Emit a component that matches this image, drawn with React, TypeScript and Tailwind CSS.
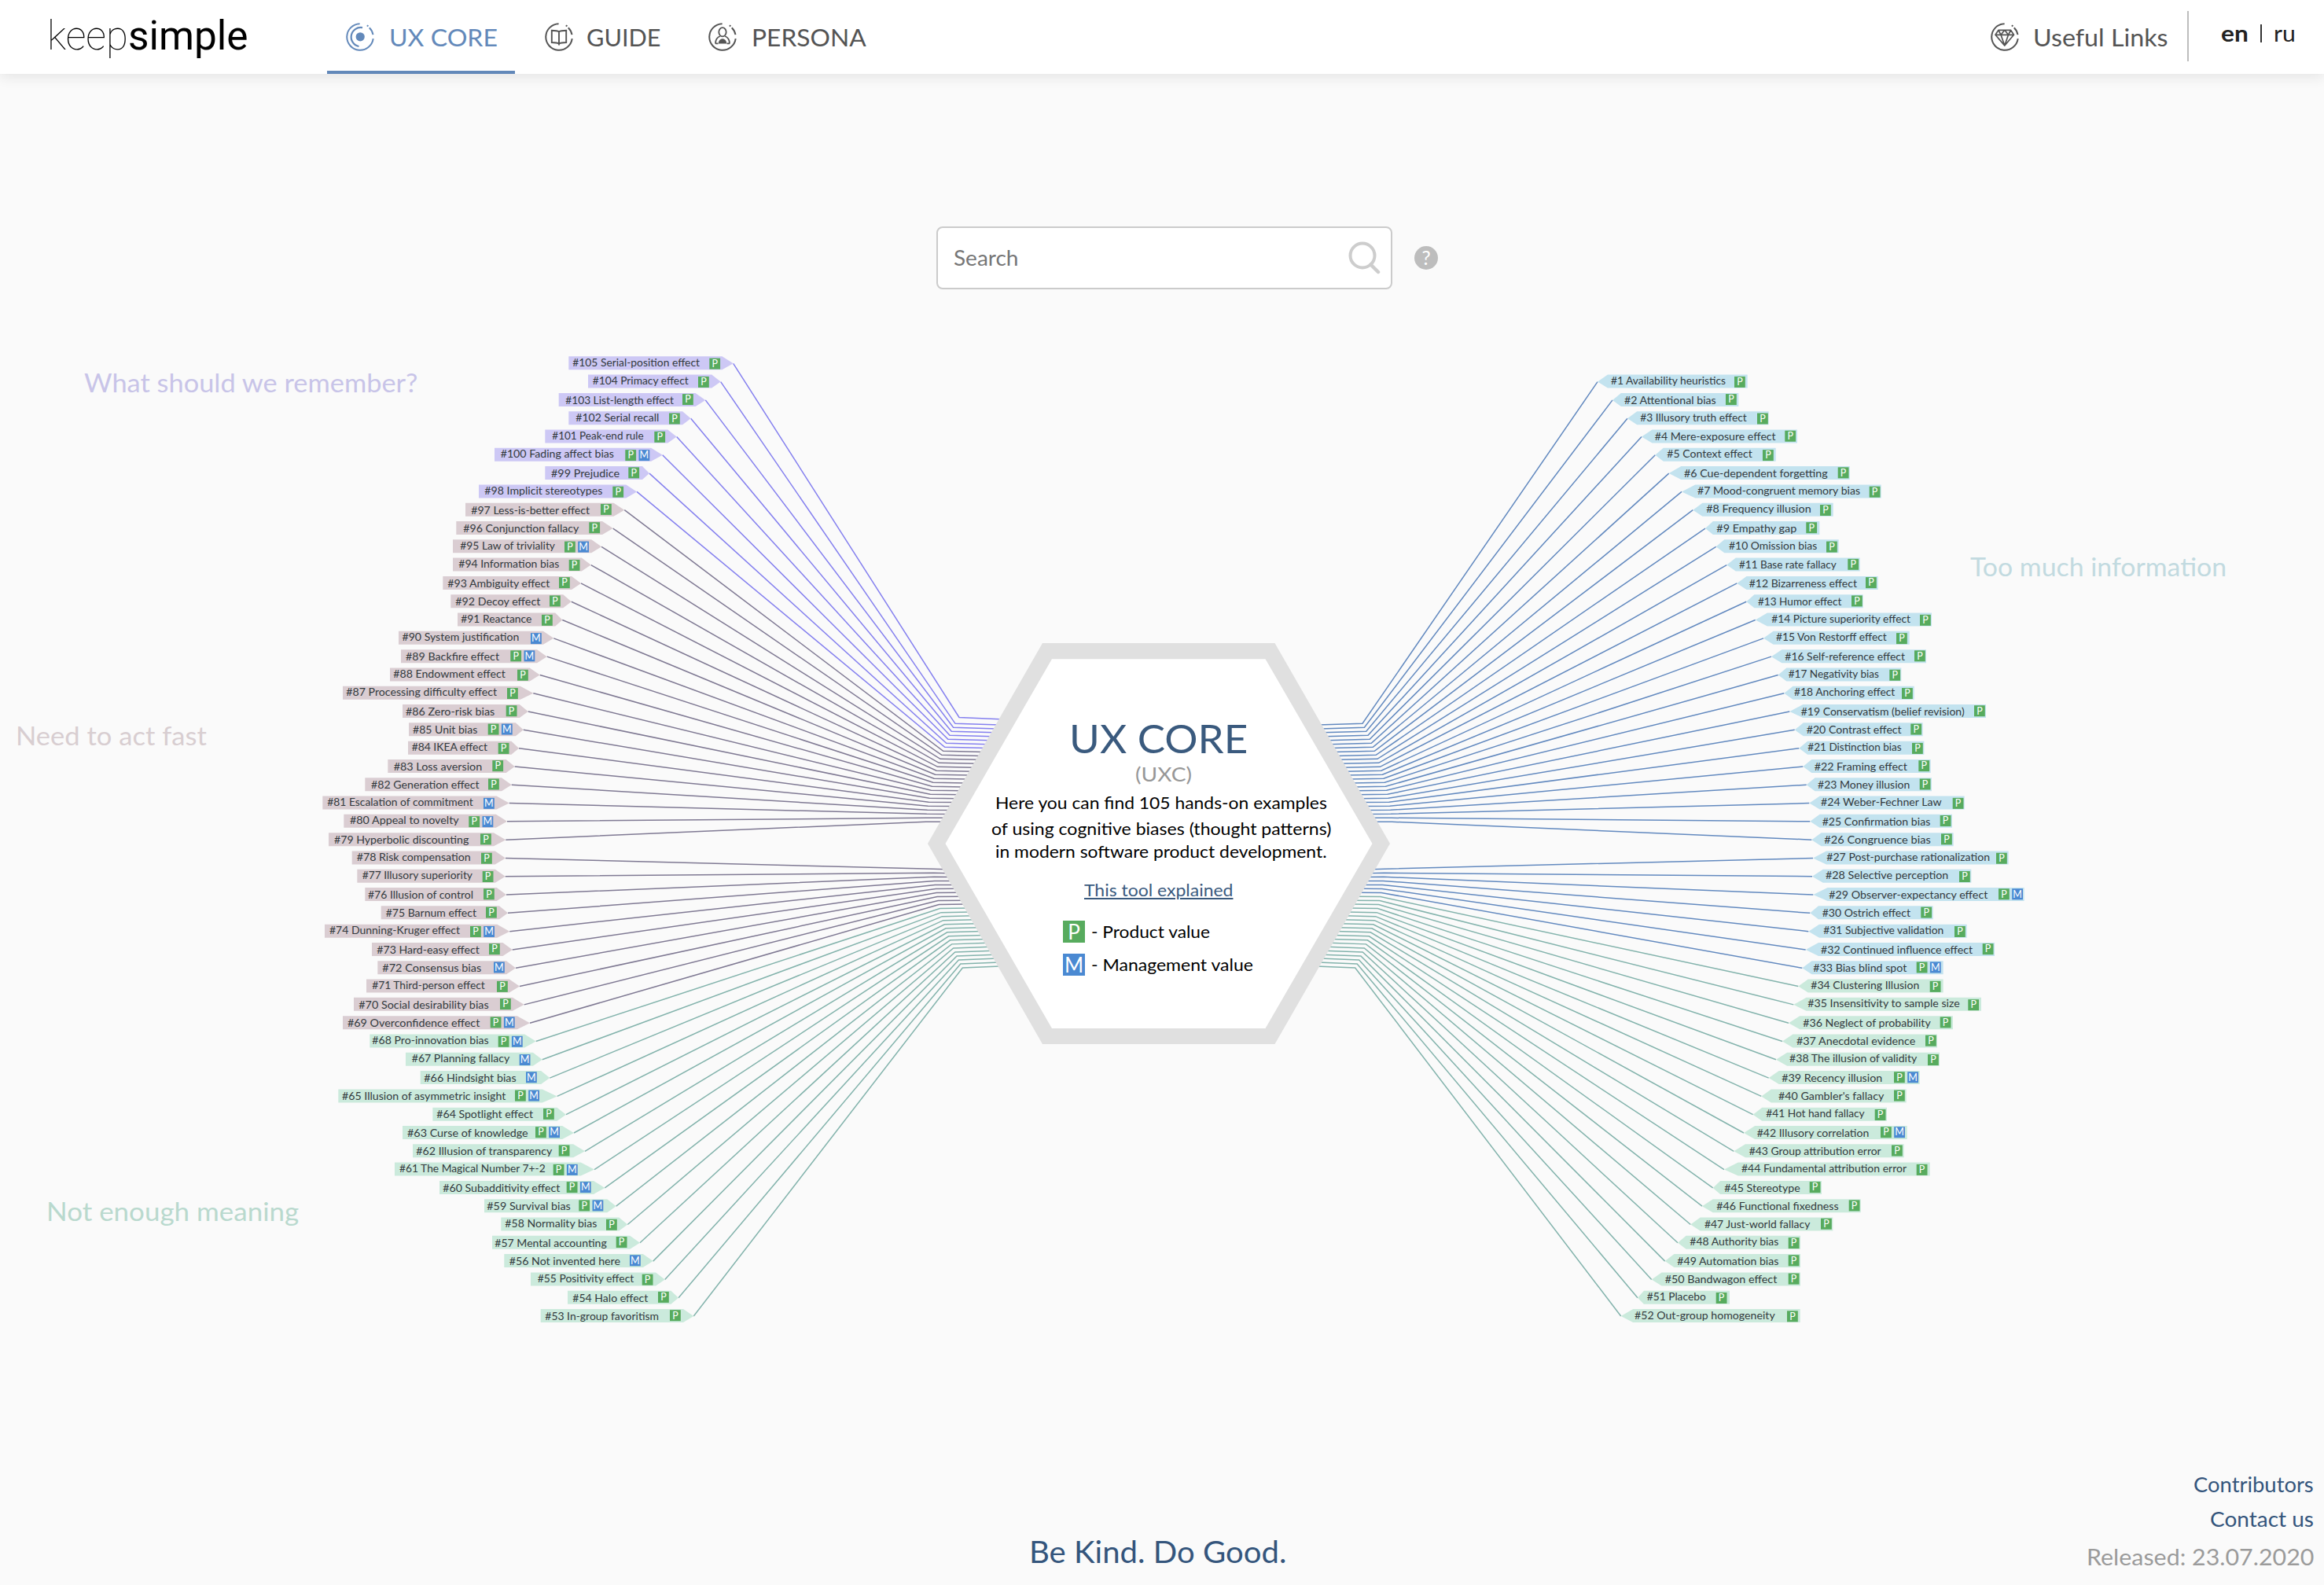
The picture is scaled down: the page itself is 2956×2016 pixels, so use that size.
import React, { useLayoutEffect, useRef, useState } from "react";

type Tags = "P" | "M" | "PM";
// number, name, outer edge, text start, text end, first badge, tip, badges, text sits lower
type Bias = [number, string, number, number, number, number, number, Tags, (0 | 1)?];

const LEFT: Bias[] = [
  [105, "Serial-position effect", 723.3, 728.3, 890, 902.3, 932.7, "P"],
  [104, "Primacy effect", 748, 753.7, 875.7, 888, 916.7, "P"],
  [103, "List-length effect", 710.7, 719.3, 857, 868, 897.3, "P", 1],
  [102, "Serial recall", 723.3, 732.3, 838.3, 851, 878.7, "P"],
  [101, "Peak-end rule", 693.3, 702.3, 818.7, 832.3, 860.7, "P"],
  [100, "Fading affect bias", 629, 636.7, 781, 795.3, 842.7, "PM"],
  [99, "Prejudice", 693.3, 701, 788, 799.3, 826, "P", 1],
  [98, "Implicit stereotypes", 609, 616.3, 766.3, 779.3, 810, "P"],
  [97, "Less-is-better effect", 592, 599.3, 750, 764, 794.3, "P", 1],
  [96, "Conjunction fallacy", 580.3, 589.3, 736.3, 749.3, 779.7, "P", 1],
  [95, "Law of triviality", 576, 585.3, 706, 718, 765, "PM"],
  [94, "Information bias", 576, 583.3, 711.3, 723.7, 751.7, "P"],
  [93, "Ambiguity effect", 563.3, 569.3, 699.3, 711, 739, "P", 1],
  [92, "Decoy effect", 573.3, 579.3, 687.3, 699, 726.7, "P", 1],
  [91, "Reactance", 582, 586.3, 676.3, 689, 715.3, "P"],
  [90, "System justification", 507, 511.5, 660.3, 675, 704.3, "M"],
  [89, "Backfire effect", 510, 516, 635, 649.3, 695.7, "PM", 1],
  [88, "Endowment effect", 496, 500.3, 642.7, 658, 686.7, "P"],
  [87, "Processing difficulty effect", 436, 440.3, 632, 645, 678.3, "P"],
  [86, "Zero-risk bias", 512, 516, 629.3, 643.7, 671.7, "P", 1],
  [85, "Unit bias", 520, 525, 607.3, 620.7, 665.7, "PM", 1],
  [84, "IKEA effect", 519, 523.7, 620, 633.7, 660, "P"],
  [83, "Loss aversion", 493.3, 500.7, 613.3, 626.3, 654.7, "P", 1],
  [82, "Generation effect", 464.3, 472, 609.7, 621, 650.7, "P", 1],
  [81, "Escalation of commitment", 410.3, 416.3, 601.7, 615, 647.7, "M"],
  [80, "Appeal to novelty", 437.3, 445, 583.7, 596.3, 645, "PM"],
  [79, "Hyperbolic discounting", 418, 425, 596.3, 611, 643.3, "P", 1],
  [78, "Risk compensation", 447.7, 453.7, 598.7, 612, 643, "P"],
  [77, "Illusory superiority", 454.3, 460.7, 601, 613.7, 642.7, "P"],
  [76, "Illusion of control", 464.3, 468, 602, 615, 644, "P", 1],
  [75, "Barnum effect", 484.7, 490.7, 606, 618, 646, "P", 1],
  [74, "Dunning-Kruger effect", 413, 419, 585, 598, 648.3, "PM"],
  [73, "Hard-easy effect", 473, 479.3, 609.7, 622, 651.7, "P", 1],
  [72, "Consensus bias", 480.3, 486.3, 612.3, 628, 656, "M", 1],
  [71, "Third-person effect", 466, 473.3, 616.7, 632, 661, "P"],
  [70, "Social desirability bias", 450, 456.3, 621.7, 636, 666.7, "P", 1],
  [69, "Overconfidence effect", 436, 442, 610.3, 623.7, 674, "PM", 1],
  [68, "Pro-innovation bias", 470.3, 473.3, 621.7, 633.7, 681.7, "PM"],
  [67, "Planning fallacy", 516, 523.7, 648.3, 660.7, 689.7, "M"],
  [66, "Hindsight bias", 534.7, 539.3, 656.7, 669, 699.3, "M", 1],
  [65, "Illusion of asymmetric insight", 430.3, 435, 643.3, 655, 708.7, "PM", 1],
  [64, "Spotlight effect", 550.3, 555.3, 678, 691, 720, "P", 1],
  [63, "Curse of knowledge", 512, 518, 671.7, 681, 730, "PM", 1],
  [62, "Illusion of transparency", 525, 529.3, 702.3, 710.7, 744, "P", 1],
  [61, "The Magical Number 7+-2", 502, 508, 693.7, 703.7, 756, "PM"],
  [60, "Subadditivity effect", 559, 563.3, 712.3, 720.7, 769.3, "PM", 1],
  [59, "Survival bias", 616, 619.3, 725.7, 736.3, 783.7, "PM", 1],
  [58, "Normality bias", 637.3, 642.3, 759.3, 771, 798.3, "P"],
  [57, "Mental accounting", 626, 629.3, 771.7, 783.7, 814, "P", 1],
  [56, "Not invented here", 641.3, 647.7, 789, 801, 830.7, "M", 1],
  [55, "Positivity effect", 675, 683.7, 806.3, 816.7, 845.7, "P"],
  [54, "Halo effect", 722, 728.3, 824.3, 837, 863, "P", 1],
  [53, "In-group favoritism", 687.7, 693.3, 838, 852, 882.3, "P", 1],
];

const RIGHT: Bias[] = [
  [1, "Availability heuristics", 2222.7, 2049, 2195, 2206, 2032, "P"],
  [2, "Attentional bias", 2211.3, 2066, 2182.7, 2195, 2051, "P", 1],
  [3, "Illusory truth effect", 2249.7, 2086.3, 2221.7, 2235, 2070, "P"],
  [4, "Mere-exposure effect", 2286, 2104.7, 2258.7, 2270.3, 2088, "P", 1],
  [5, "Context effect", 2258.7, 2120.3, 2228.7, 2242, 2105.3, "P"],
  [6, "Cue-dependent forgetting", 2352.7, 2142, 2324.7, 2337.7, 2122.7, "P", 1],
  [7, "Mood-congruent memory bias", 2392.7, 2159, 2366, 2377.7, 2139, "P"],
  [8, "Frequency illusion", 2331.7, 2170.3, 2303.7, 2315, 2153.3, "P"],
  [9, "Empathy gap", 2314.3, 2183.3, 2285.3, 2297.3, 2169, "P", 1],
  [10, "Omission bias", 2338.7, 2199, 2311.3, 2323, 2182.7, "P"],
  [11, "Base rate fallacy", 2365.7, 2212, 2335.7, 2350.3, 2196.3, "P", 1],
  [12, "Bizarreness effect", 2388.7, 2224.7, 2362, 2373, 2209.3, "P", 1],
  [13, "Humor effect", 2369.7, 2236, 2342.3, 2355, 2221.3, "P", 1],
  [14, "Picture superiority effect", 2457, 2253.3, 2430, 2442, 2232.7, "P"],
  [15, "Von Restorff effect", 2428.7, 2259, 2399.7, 2412, 2243, "P"],
  [16, "Self-reference effect", 2450, 2270.3, 2423, 2435, 2253, "P", 1],
  [17, "Negativity bias", 2418.3, 2274.7, 2390, 2403.3, 2261.7, "P"],
  [18, "Anchoring effect", 2434.7, 2282, 2410.3, 2419, 2269.3, "P"],
  [19, "Conservatism (belief revision)", 2526, 2290.7, 2498.7, 2511, 2276.3, "P", 1],
  [20, "Contrast effect", 2445.7, 2297.7, 2418.7, 2430.3, 2282.7, "P", 1],
  [21, "Distinction bias", 2447.3, 2299.3, 2418.7, 2432, 2288.3, "P"],
  [22, "Framing effect", 2455.7, 2307.7, 2426, 2440.3, 2293.3, "P", 1],
  [23, "Money illusion", 2457, 2312, 2429.3, 2441.7, 2297.7, "P", 1],
  [24, "Weber-Fechner Law", 2498.7, 2316, 2469.7, 2483.7, 2301.3, "P"],
  [25, "Confirmation bias", 2483, 2317.7, 2455.3, 2467.7, 2302.3, "P", 1],
  [26, "Congruence bias", 2484.7, 2320.3, 2455.7, 2469, 2304.3, "P", 1],
  [27, "Post-purchase rationalization", 2554.7, 2323.3, 2531, 2539, 2306, "P"],
  [28, "Selective perception", 2507.3, 2322, 2478.3, 2492, 2305, "P"],
  [29, "Observer-expectancy effect", 2574.7, 2326.3, 2528.3, 2542, 2306.3, "PM", 1],
  [30, "Ostrich effect", 2458.7, 2317.7, 2430, 2443.3, 2302.3, "P", 1],
  [31, "Subjective validation", 2501.7, 2319.3, 2472.3, 2486, 2300.3, "P"],
  [32, "Continued influence effect", 2537, 2316, 2509, 2521.7, 2296.7, "P", 1],
  [33, "Bias blind spot", 2471.7, 2306.3, 2425.3, 2437.7, 2292.3, "PM", 1],
  [34, "Clustering Illusion", 2471.7, 2303.3, 2441.3, 2454.7, 2287.3, "P"],
  [35, "Insensitivity to sample size", 2520, 2299.3, 2492.7, 2503.3, 2281.3, "P"],
  [36, "Neglect of probability", 2484, 2293.3, 2455.7, 2467.7, 2275, "P", 1],
  [37, "Anecdotal evidence", 2464, 2285, 2436.3, 2449, 2267, "P", 1],
  [38, "The illusion of validity", 2467, 2276, 2438.3, 2452, 2259, "P"],
  [39, "Recency illusion", 2441.7, 2266.3, 2394.3, 2409, 2249.7, "PM", 1],
  [40, "Gambler's fallacy", 2424.7, 2262, 2396.3, 2409, 2240.3, "P", 1],
  [41, "Hot hand fallacy", 2400, 2246.3, 2371.7, 2384.7, 2229.7, "P"],
  [42, "Illusory correlation", 2425.7, 2234.7, 2377.3, 2392, 2218, "PM", 1],
  [43, "Group attribution error", 2421.7, 2224.7, 2392.7, 2406, 2205.3, "P", 1],
  [44, "Fundamental attribution error", 2454.7, 2215, 2425, 2437.7, 2193, "P"],
  [45, "Stereotype", 2317, 2193.3, 2289.7, 2301.7, 2178.7, "P", 1],
  [46, "Functional fixedness", 2366.7, 2183.3, 2338.7, 2351.7, 2165, "P", 1],
  [47, "Just-world fallacy", 2331.3, 2168, 2302.3, 2316, 2150.3, "P", 1],
  [48, "Authority bias", 2290, 2149.3, 2262.3, 2274.7, 2134, "P"],
  [49, "Automation bias", 2290, 2133.3, 2262.3, 2274.7, 2117.7, "P", 1],
  [50, "Bandwagon effect", 2290, 2117.7, 2260.3, 2274.7, 2100.7, "P", 1],
  [51, "Placebo", 2200, 2094.7, 2169.7, 2182.7, 2083, "P"],
  [52, "Out-group homogeneity", 2289.7, 2079, 2257.7, 2273, 2061.7, "P"],
];

const CENTER_X = 1474;
const ROW = 23.302;
const FIRST_ROW = 462.3;

function palette(n: number) {
  if (n >= 98) return { line: "stroke-[#8580ef]", tag: "fill-[#cdc8f5]" };
  if (n >= 69) return { line: "stroke-[#7f7993]", tag: "fill-[#dacdd2]" };
  if (n >= 34) return { line: "stroke-[#83b3ac]", tag: "fill-[#cbeadc]" };
  return { line: "stroke-[#6289bf]", tag: "fill-[#c3e3ef]" };
}

// Bend and end point of the connector in a given row, on the left side.
function connector(row: number) {
  let kneeX, kneeY, endY;
  if (row === 0) {
    kneeX = 1220;
    kneeY = 912.4;
    endY = 915;
  } else if (row <= 26) {
    const i = row - 1;
    kneeX = 1215 - 2.45 * i + 0.038 * i * i;
    kneeY = 920.3 + 5 * i;
    endY = 922 + 4.93 * i;
  } else {
    const i = row - 27;
    kneeX = 1187 + 0.43 * i + 0.0425 * i * i;
    kneeY = 1105.3 + 5.03 * i;
    endY = 1105.7 + 4.93 * i;
  }
  const endX = 1185 + Math.abs(1073 - endY) * 0.572;
  return { kneeX, kneeY, endX, endY };
}

function Badge({ kind, x, y }: { kind: string; x: number; y: number }) {
  return (
    <g>
      <rect x={x} y={y} width={13.8} height={14} className={kind === "P" ? "fill-[#57ab5e]" : "fill-[#4a89d2]"} />
      <text x={x + 6.9} y={y + 11.3} textAnchor="middle" className="fill-white text-[12.5px]">
        {kind}
      </text>
    </g>
  );
}

function BiasTag({ bias, row, right }: { bias: Bias; row: number; right?: boolean }) {
  const [n, name, edge, textStart, textEnd, badge, tip, tags, low] = bias;
  const y = FIRST_ROW + ROW * row;
  const { line, tag } = palette(n);
  const k = connector(row);
  const mx = (x: number) => (right ? 2 * CENTER_X - x : x);
  const corner = tip + (edge - tip) * 0.068;
  const top = y - 9;
  const bottom = y + 8;
  return (
    <g>
      <polyline
        className={line}
        fill="none"
        strokeWidth={1.5}
        points={`${tip},${y} ${mx(k.kneeX)},${k.kneeY} ${mx(k.endX)},${k.endY}`}
      />
      <polygon className={tag} points={`${edge},${top} ${corner},${top} ${tip},${y} ${corner},${bottom} ${edge},${bottom}`} />
      <text
        x={textStart}
        y={y + (low ? 4.8 : 3.5)}
        textLength={textEnd - textStart}
        lengthAdjust="spacingAndGlyphs"
        className="fill-[#333a3e] text-[13.2px]"
      >
        {`#${n} ${name}`}
      </text>
      {tags.split("").map((t, i) => (
        <Badge key={t} kind={t} x={badge + i * 17.2} y={y - (low ? 7.8 : 6.7)} />
      ))}
    </g>
  );
}

// Text stretched horizontally so that it occupies exactly `w` pixels.
function Fit({ w, className = "", children }: { w: number; className?: string; children: string }) {
  const ref = useRef<HTMLSpanElement>(null);
  const [natural, setNatural] = useState(w);
  useLayoutEffect(() => {
    if (ref.current) setNatural(ref.current.offsetWidth);
  }, [children]);
  return (
    <span
      ref={ref}
      className={`inline-block origin-left whitespace-pre ${className}`}
      style={{ transform: `scaleX(${w / natural})`, marginRight: w - natural }}
    >
      {children}
    </span>
  );
}

function Ring({ children }: { children: React.ReactNode }) {
  return (
    <svg viewBox="0 0 36 36" className="size-9 shrink-0" fill="none" stroke="currentColor" strokeWidth="2">
      <path d="M17.6 1.2A16.8 16.8 0 1 0 34.7 20.2" />
      <path d="M29.8 6.2A16.8 16.8 0 0 1 34.5 15.2" />
      <path d="M26.8 3.2l1.6 1.2" />
      {children}
    </svg>
  );
}

const CoreIcon = () => (
  <Ring>
    <path d="M21 6.2A12 12 0 1 0 16.5 30" strokeWidth="2.2" />
    <circle cx="18.2" cy="17.8" r="5.6" fill="currentColor" stroke="none" />
  </Ring>
);

const GuideIcon = () => (
  <Ring>
    <path
      d="M18 11.5c-1.800-1.300-4.300-1.700-9.200-1.700v15.200c5 0 7.400.4 9.200 1.700 1.800-1.300 4.300-1.700 9.200-1.700V9.800c-5 0-7.400.4-9.200 1.700zM18 11.500v17"
      strokeWidth="1.9"
    />
  </Ring>
);

const PersonaIcon = () => (
  <Ring>
    <ellipse cx="18" cy="11.800" rx="4.700" ry="5.600" strokeWidth="1.800" />
    <path
      d="M9 26.500c0-4.500 2.200-8 5.800-9.500M27 26.500c0-4.500-2.200-8-5.800-9.500M9 26.300h3.500M23.500 26.300H27"
      strokeWidth="1.800"
    />
    <path d="M12.800 26.500a5.200 6.300 0 0 1 10.400 0z" fill="currentColor" stroke="none" />
  </Ring>
);

const DiamondIcon = () => (
  <Ring>
    <path
      d="M10 9.300h15.500l4 6L17.800 29 6 15.300zM6 15.300h23.500M13 15.300L17.800 29l4.700-13.700M10 9.300l3 6 4.800-6 4.700 6 3-6"
      strokeWidth="1.700"
      strokeLinejoin="round"
    />
  </Ring>
);

function Header() {
  return (
    <header className="flex h-[94px] shrink-0 bg-white text-[30px] text-[#545454] shadow-[0_4px_16px_rgba(0,0,0,0.09)]">
      <div className="flex w-[416px] items-center pb-0.5 pl-[60px] font-[Roboto,sans-serif] text-[52px] text-black">
        <Fit w={103} className="font-thin">keep</Fit>
        <Fit w={153}>simple</Fit>
      </div>
      <nav className="flex">
        <a className="flex w-[239px] items-center gap-[19px] border-b-4 border-[#6288b9] pl-6 pt-1 text-[#6389ba]">
          <CoreIcon />
          <Fit w={138}>UX CORE</Fit>
        </a>
        <a className="flex w-[208px] items-center gap-[17px] pl-[38px]">
          <GuideIcon />
          <Fit w={95}>GUIDE</Fit>
        </a>
        <a className="flex items-center gap-[19px] pl-[38px]">
          <PersonaIcon />
          <Fit w={146}>PERSONA</Fit>
        </a>
      </nav>
      <div className="ml-auto flex">
        <a className="flex items-center gap-[18px]">
          <DiamondIcon />
          <Fit w={172}>Useful Links</Fit>
        </a>
        <div className="ml-6 mt-3.5 h-16 w-0.5 bg-[#bdbdbd]" />
        <div className="flex w-[172px] items-center pb-2.5 pl-[41px] text-[28px] text-[#222]">
          <Fit w={35} className="font-bold">en</Fit>
          <span className="ml-[15px] h-[23px] w-0.5 bg-[#333]" />
          <Fit w={28} className="ml-[15px]">ru</Fit>
        </div>
      </div>
    </header>
  );
}

function SearchBar() {
  return (
    <div className="ml-[1191px] mt-[194px] flex items-center gap-7">
      <div className="flex h-20 w-[580px] items-center justify-between rounded-lg border-2 border-[#cbcbcb] bg-white pl-5 pr-3 text-[#767676]">
        <Fit w={83} className="text-[26px]">Search</Fit>
        <svg viewBox="0 0 42 42" className="size-[42px]" fill="none" stroke="#cdcdcd" strokeWidth="4">
          <circle cx="18" cy="18" r="15.500" />
          <path d="M28.500 29.500l9.500 9.500" strokeLinecap="round" strokeWidth="4.500" />
        </svg>
      </div>
      <div className="flex size-[30px] items-center justify-center rounded-full bg-[#bdbdbd] pb-0.5 text-[25px] leading-none text-white">
        ?
      </div>
    </div>
  );
}

function Legend({ kind, label, w }: { kind: "P" | "M"; label: string; w: number }) {
  return (
    <div className="flex h-7 items-center gap-2">
      <span
        className={`flex size-7 items-center justify-center text-[26px] leading-none text-white ${
          kind === "P" ? "bg-[#57ab5e]" : "bg-[#4a89d2]"
        }`}
      >
        {kind}
      </span>
      <Fit w={w}>{label}</Fit>
    </div>
  );
}

function Hexagon() {
  return (
    <div className="absolute left-[1180px] top-[451px] flex h-[510px] w-[588px] flex-col items-center pt-[89px] text-[22px] text-black">
      <h1 className="h-[60px] text-[51px] leading-[62px] text-[#3a5a7e]">
        <Fit w={227}>UX CORE</Fit>
      </h1>
      <div className="h-[30px] pl-3 text-[25px] leading-[32px] text-[#979797]">
        <Fit w={72}>(UXC)</Fit>
      </div>
      <p className="mt-1.5 flex flex-col items-center pl-1.5">
        <Fit w={422} className="h-[33px] leading-[33px]">Here you can find 105 hands-on examples</Fit>
        <Fit w={432} className="h-[33px] leading-[33px]">of using cognitive biases (thought patterns)</Fit>
        <Fit w={422} className="h-[25px] leading-[25px]">in modern software product development.</Fit>
      </p>
      <a className="mt-[22px] h-[30px] leading-[30px] text-[#3a5a7e]">
        <Fit w={190} className="underline decoration-2 underline-offset-2">This tool explained</Fit>
      </a>
      <div className="mt-6 flex w-[244px] flex-col gap-3.5">
        <Legend kind="P" label="- Product value" w={151} />
        <Legend kind="M" label="- Management value" w={206} />
      </div>
    </div>
  );
}

function Chart() {
  return (
    <section className="relative h-[1332px] text-[33px] leading-10">
      <svg viewBox="0 368 2956 1332" className="block h-full w-full">
        {LEFT.map((b, i) => (
          <BiasTag key={b[0]} bias={b} row={i} />
        ))}
        {RIGHT.map((b, i) => (
          <BiasTag key={b[0]} bias={b} row={i + 1} right />
        ))}
        <polygon points="1180,1073 1326,818 1621.500,818 1768,1073 1621.500,1328 1326,1328" className="fill-[#e0e0e0]" />
        <polygon points="1202.500,1073 1338,838.300 1609.500,838.300 1745.500,1073 1609.500,1308 1338,1308" className="fill-white" />
      </svg>
      <div className="absolute left-[107px] top-[98px] text-[#c8c4e8]">
        <Fit w={424}>What should we remember?</Fit>
      </div>
      <div className="absolute left-5 top-[547px] text-[#d8ced1]">
        <Fit w={243}>Need to act fast</Fit>
      </div>
      <div className="absolute left-[59px] top-[1152px] text-[#b9d9ce]">
        <Fit w={321}>Not enough meaning</Fit>
      </div>
      <div className="absolute left-[2506px] top-[332px] text-[#c2dae0]">
        <Fit w={326}>Too much information</Fit>
      </div>
      <Hexagon />
    </section>
  );
}

function Footer() {
  return (
    <footer className="mt-auto grid grid-cols-[1309px_1fr_auto] items-end pr-[13px] text-[#34557c]">
      <div className="col-start-2 pb-[18px] text-[38px] leading-[50px]">
        <Fit w={327}>Be Kind. Do Good.</Fit>
      </div>
      <div className="flex flex-col items-end pb-[14px] text-[26.5px] leading-[44px]">
        <Fit w={153}>Contributors</Fit>
        <Fit w={132}>Contact us</Fit>
        <div className="mt-1 text-[28.500px] text-[#9b9b9b]">
          <Fit w={289}>Released: 23.07.2020</Fit>
        </div>
      </div>
    </footer>
  );
}

export default function App() {
  return (
    <div className="flex h-[2016px] w-[2956px] flex-col overflow-hidden bg-[#fafafa] font-[Lato,sans-serif]">
      <Header />
      <SearchBar />
      <Chart />
      <Footer />
    </div>
  );
}
